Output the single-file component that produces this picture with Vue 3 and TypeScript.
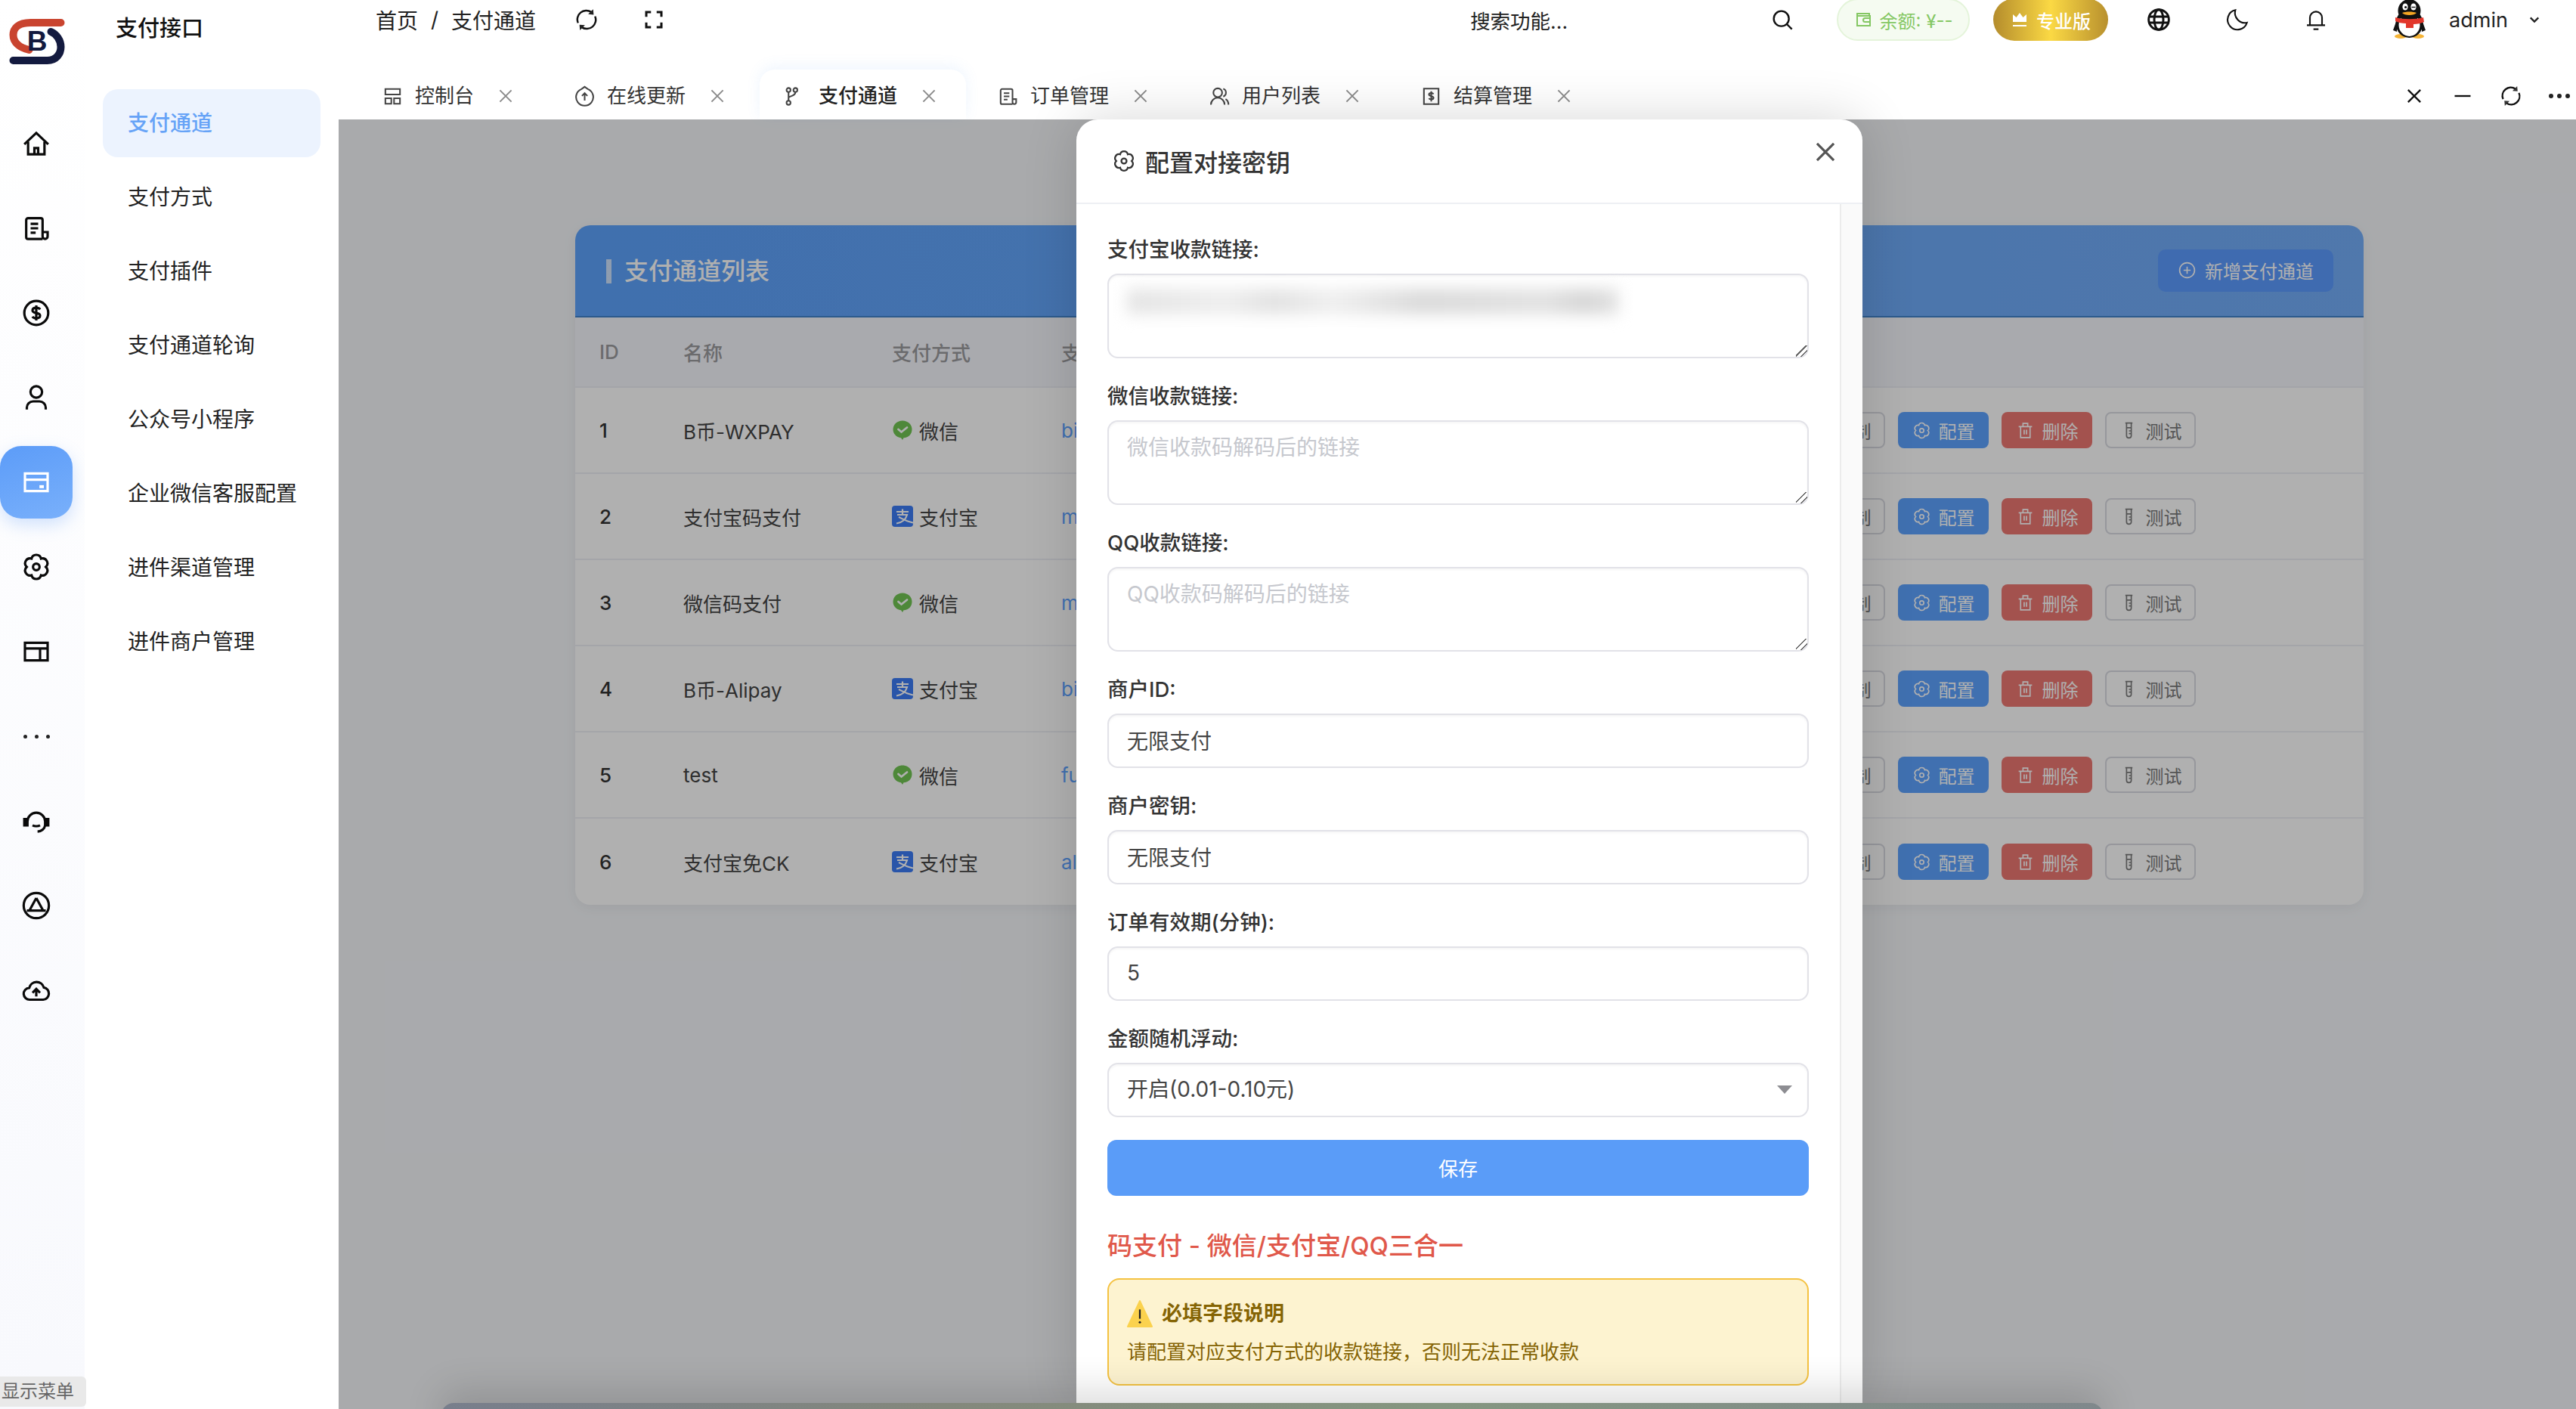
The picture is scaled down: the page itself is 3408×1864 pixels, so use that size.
<script setup lang="ts">
import { ref } from 'vue'

// 图标路径
const icons: Record<string, string> = {
  home: '<path d="M2.5 12.5 12 3.5l9.5 9"/><path d="M5.5 10.5V20.5h13V10.5"/><path d="M10.5 20.5v-5h3v5"/>',
  doc: '<path d="M17 20.5H5.500A1.500 1.500 0 0 1 4 19V5.500A1.500 1.500 0 0 1 5.500 4H15.500A1.500 1.500 0 0 1 17 5.500V18.500a2 2 0 0 0 2 2 2 2 0 0 0 2-2V15h-4"/><path d="M7.500 8.500h6M7.500 12h6M7.500 15.500h4"/>',
  dollar: '<circle cx="12" cy="12" r="9.5"/><path d="M15 9.200c-.6-.9-1.700-1.300-3-1.300-1.800 0-3 .8-3 2.100 0 2.900 6 1.300 6 4.100 0 1.300-1.200 2.100-3 2.100-1.400 0-2.500-.5-3-1.400M12 6v12"/>',
  person: '<circle cx="12" cy="7.500" r="4.600"/><path d="M4.500 21.500V20a5 5 0 0 1 5-5h5a5 5 0 0 1 5 5v1.500"/>',
  card: '<path d="M3 5h18v14H3zM3 10h18"/><path d="M14.500 15.500h3.500" stroke-width="2.400"/>',
  gear: '<path d="M8.200 5.420A3.900 3.900 0 0 1 15.800 5.420 3.900 3.900 0 0 1 19.600 12 3.900 3.900 0 0 1 15.800 18.580 3.900 3.900 0 0 1 8.200 18.580 3.900 3.900 0 0 1 4.400 12 3.900 3.900 0 0 1 8.200 5.420z"/><circle cx="12" cy="12" r="2.600"/>',
  layout: '<path d="M3 5h18v14H3zM3 9.500h18M15 9.500V19"/>',
  headset: '<path d="M5 12.500a7 7 0 0 1 14 0"/><path d="M2.500 10.500h2.500v5H2.500zM19 10.500h2.500v5H19z" fill="currentColor"/><path d="M9 15.500c1.600.8 4.400.8 6 0M19 15.500c-.4 3-3 4.800-6 5"/>',
  store: '<circle cx="12" cy="12" r="10"/><path d="M12 6 6.500 16M12 6l5.500 10M4.500 16h15"/>',
  cloud: '<path d="M7 19.500a4.700 4.700 0 0 1-.6-9.400A6 6 0 0 1 18 9.800a4.900 4.900 0 0 1-.5 9.700z"/><path d="M12 17v-5.500M9 14l3-3 3 3"/>',
  refresh: '<path d="M3 15.500A9.500 9.500 0 0 1 17 3.900M21 8.500A9.500 9.500 0 0 1 7 20.100"/><path d="m19 .9.500 5.800-5.800-.5zM5 23.100l-.5-5.800 5.800.5z" fill="currentColor" stroke="none"/>',
  full: '<path d="M4 9V4h5M15 4h5v5M20 15v5h-5M9 20H4v-5"/>',
  grid: '<path d="M4 4h16v6H4zM4 14h6.500v6H4zM13.500 14H20v6h-6.500z"/>',
  upload: '<path d="M12 1.500 15.500 4A9.400 9.400 0 1 1 8.500 4z"/><path d="M12 16.500v-8M9 11.500 12 8.500l3 3"/>',
  branch: '<circle cx="3.500" cy="5" r="2.200"/><circle cx="3.500" cy="19" r="2.200"/><circle cx="11" cy="5" r="2.200"/><path d="M3.500 7.200v9.600M11 7.200c0 4-3.500 3.500-7.500 6"/>',
  users: '<circle cx="10" cy="8" r="4.800"/><path d="M2.500 21a7.500 7.500 0 0 1 15 0M16 3.600a4.600 4.600 0 0 1 0 8.600M18.500 15c2 1 3.200 3.200 3.200 6"/>',
  settle: '<path d="M4 3.500h16v17H4z"/><path d="M14.500 9.500c-.5-.8-1.400-1.200-2.500-1.200-1.500 0-2.500.6-2.500 1.700 0 2.400 5 1 5 3.400 0 1.100-1 1.800-2.500 1.800-1.200 0-2.100-.4-2.500-1.200M12 6.500v11"/>',
  search: '<circle cx="11" cy="11" r="7.500"/><path d="m16.500 16.500 5 5"/>',
  wallet: '<path d="M20 7V4H4v16h17V7H4"/><path d="M21 10h-6.500a2.500 2.500 0 0 0 0 5H21"/>',
  crown: '<path d="M3 15V5l4.500 4L12 3l4.500 6L21 5v10z" fill="currentColor" stroke="none"/><path d="M3 20h18"/>',
  globe: '<circle cx="12" cy="12" r="10"/><path d="M2 9h20M2 15h20"/><ellipse cx="12" cy="12" rx="4.500" ry="10"/>',
  moon: '<path d="M10 2.500A9.800 9.800 0 1 0 21.500 15 10 10 0 0 1 10 2.500z"/>',
  bell: '<path d="M6 17V10a6 6 0 0 1 12 0v7M3 17.500h18M9.500 21.500h5"/>',
  close: '<path d="m5 5 14 14M19 5 5 19"/>',
  minus: '<path d="M3 12h18"/>',
  chevron: '<path d="m5 8.500 7 7 7-7"/>',
  plus: '<circle cx="12" cy="12" r="9.500"/><path d="M12 7.500v9M7.500 12h9"/>',
  trash: '<path d="M3.500 7h17M6 7v14h12V7M9 7V3h6v4M10.500 11v6M13.500 11v6"/>',
  tube: '<path d="M7.500 2.500h9M9 2.500v16a3 3 0 0 0 6 0v-16M9 8.500h6M12 12.500h3M12 16h3"/>',
  copy: '<path d="M8 8h12v12H8zM16 8V4H4v12h4"/>'
}

const railItems = ['home', 'doc', 'dollar', 'person', 'card', 'gear', 'layout', 'dots', 'headset', 'store', 'cloud']
const menuItems = ['支付通道', '支付方式', '支付插件', '支付通道轮询', '公众号小程序', '企业微信客服配置', '进件渠道管理', '进件商户管理']

const tabs = [
  { title: '控制台', icon: 'grid' },
  { title: '在线更新', icon: 'upload' },
  { title: '支付通道', icon: 'branch', active: true },
  { title: '订单管理', icon: 'doc' },
  { title: '用户列表', icon: 'users' },
  { title: '结算管理', icon: 'settle' }
]

const channels = [
  { id: 1, name: 'B币-WXPAY', method: 'wechat', plugin: 'bilipay' },
  { id: 2, name: '支付宝码支付', method: 'alipay', plugin: 'mapi' },
  { id: 3, name: '微信码支付', method: 'wechat', plugin: 'mapi' },
  { id: 4, name: 'B币-Alipay', method: 'alipay', plugin: 'bilipay' },
  { id: 5, name: 'test', method: 'wechat', plugin: 'future' },
  { id: 6, name: '支付宝免CK', method: 'alipay', plugin: 'alipay' }
]

const merchantId = ref('无限支付')
const merchantKey = ref('无限支付')
const expire = ref('5')
const floatMode = ref('on')
</script>

<template>
  <div class="layout">
    <!-- 图标导航 -->
    <aside class="rail">
      <div class="logo">
        <svg viewBox="0 0 73 62" class="logo-mark">
          <path d="M68 6H28C11 6 5 14 5 22c0 10 8 17 21 20" fill="none" stroke="#c9442f" stroke-width="10" stroke-linecap="round" />
          <path d="M5 56h45c12 0 18-9 18-18 0-9-6-17-13-20" fill="none" stroke="#131a3f" stroke-width="10" stroke-linecap="round" />
          <text x="36.500" y="43" text-anchor="middle" class="logo-text">B</text>
        </svg>
      </div>
      <div v-for="item in railItems" :key="item" class="rail-item" :class="{ active: item === 'card' }">
        <span v-if="item === 'dots'" class="rail-dots"><i></i><i></i><i></i></span>
        <svg v-else viewBox="0 0 24 24" class="rail-icon" v-html="icons[item]"></svg>
      </div>
    </aside>

    <!-- 二级菜单 -->
    <nav class="submenu">
      <h2 class="submenu-title">支付接口</h2>
      <a v-for="(item, i) in menuItems" :key="item" class="submenu-item" :class="{ active: i === 0 }">{{ item }}</a>
    </nav>

    <section class="main">
      <header class="topbar">
        <div class="top-row">
          <span class="crumb">首页</span>
          <span class="crumb-sep">/</span>
          <span class="crumb">支付通道</span>
          <svg viewBox="0 0 24 24" class="top-icon refresh-icon" v-html="icons.refresh"></svg>
          <svg viewBox="0 0 24 24" class="top-icon full-icon" v-html="icons.full"></svg>
          <span class="search-text">搜索功能...</span>
          <svg viewBox="0 0 24 24" class="top-icon search-icon" v-html="icons.search"></svg>
          <span class="balance-pill">
            <svg viewBox="0 0 24 24" class="pill-icon" v-html="icons.wallet"></svg>
            余额: ¥--
          </span>
          <span class="pro-pill">
            <svg viewBox="0 0 24 24" class="pill-icon" v-html="icons.crown"></svg>
            专业版
          </span>
          <svg viewBox="0 0 24 24" class="top-icon globe-icon" v-html="icons.globe"></svg>
          <svg viewBox="0 0 24 24" class="top-icon tool-icon" v-html="icons.moon"></svg>
          <svg viewBox="0 0 24 24" class="top-icon tool-icon" v-html="icons.bell"></svg>
          <svg viewBox="0 0 47 54" class="avatar">
            <ellipse cx="12" cy="49" rx="8" ry="3" fill="#f5b335" />
            <ellipse cx="35" cy="49" rx="8" ry="3" fill="#f5b335" />
            <path d="M7 27 2 41l5 2zM40 27l5 14-5 2z" fill="#111" />
            <ellipse cx="23.500" cy="32" rx="18" ry="19" fill="#111" />
            <ellipse cx="23.500" cy="34" rx="14" ry="15" fill="#fff" />
            <ellipse cx="23.500" cy="15" rx="15" ry="15" fill="#111" />
            <ellipse cx="18" cy="10" rx="3.600" ry="4.600" fill="#fff" />
            <ellipse cx="29" cy="10" rx="3.600" ry="4.600" fill="#fff" />
            <circle cx="18.600" cy="10.500" r="1.600" fill="#111" />
            <path d="M26.500 10.500h5" stroke="#111" stroke-width="1.400" />
            <path d="M14 18c5-2 14-2 19 0-3 4-16 4-19 0z" fill="#f5a623" />
            <path d="M5 24c10 3 27 3 37 0l1 6c-4 2-9 3-14 3v5h-10v-6c-5 0-10-1-14-3z" fill="#e2372b" />
          </svg>
          <span class="user-name">admin</span>
          <svg viewBox="0 0 24 24" class="user-arrow" v-html="icons.chevron"></svg>
        </div>

        <div class="tab-row">
          <div v-for="tab in tabs" :key="tab.title" class="tab" :class="{ active: tab.active }">
            <svg viewBox="0 0 24 24" class="tab-icon" v-html="icons[tab.icon]"></svg>
            <span class="tab-title">{{ tab.title }}</span>
            <svg viewBox="0 0 24 24" class="tab-close" v-html="icons.close"></svg>
          </div>
          <div class="tab-tools">
            <svg viewBox="0 0 24 24" class="tab-tool" v-html="icons.close"></svg>
            <svg viewBox="0 0 24 24" class="tab-tool" v-html="icons.minus"></svg>
            <svg viewBox="0 0 24 24" class="tab-tool" v-html="icons.refresh"></svg>
            <span class="tool-dots"><i></i><i></i><i></i></span>
          </div>
        </div>
      </header>

      <div class="content">
        <div class="card">
          <div class="card-head">
            <h3 class="card-title">支付通道列表</h3>
            <button class="add-btn">
              <svg viewBox="0 0 24 24" class="btn-icon" v-html="icons.plus"></svg>
              新增支付通道
            </button>
          </div>
          <table class="channel-table">
            <colgroup>
              <col class="col-id" />
              <col class="col-name" />
              <col class="col-method" />
              <col class="col-plugin" />
              <col />
            </colgroup>
            <thead>
              <tr>
                <th>ID</th>
                <th>名称</th>
                <th>支付方式</th>
                <th>支付插件</th>
                <th>操作</th>
              </tr>
            </thead>
            <tbody>
              <tr v-for="row in channels" :key="row.id">
                <td class="id-cell">{{ row.id }}</td>
                <td>{{ row.name }}</td>
                <td>
                  <span class="method">
                    <svg v-if="row.method === 'wechat'" viewBox="0 0 28 28" class="method-icon">
                      <path d="M14 1.500C7 1.500 1.500 6.500 1.500 13c0 6 4.500 10.500 10.500 11.300l2 2.700 1.500-2.700C22 24 26.500 19.500 26.500 13 26.500 6.500 21 1.500 14 1.500z" fill="#71c553" />
                      <path d="m8.500 13 4 3.500 7.500-6" fill="none" stroke="#fff" stroke-width="2.800" stroke-linecap="round" />
                    </svg>
                    <svg v-else viewBox="0 0 28 28" class="method-icon">
                      <rect width="28" height="28" rx="4" fill="#3c7cf5" />
                      <path d="M6 8h16M14 4.500V12M7 12h13c-1.500 6-7 10.500-14 11.500M9 15c4 2 11 6 19 7.500" fill="none" stroke="#fff" stroke-width="2.200" />
                    </svg>
                    {{ row.method === 'wechat' ? '微信' : '支付宝' }}
                  </span>
                </td>
                <td class="plugin-cell">{{ row.plugin }}</td>
                <td>
                  <div class="row-actions">
                    <button class="row-btn plain">
                      <svg viewBox="0 0 24 24" class="btn-icon" v-html="icons.copy"></svg>复制
                    </button>
                    <button class="row-btn primary">
                      <svg viewBox="0 0 24 24" class="btn-icon" v-html="icons.gear"></svg>配置
                    </button>
                    <button class="row-btn danger">
                      <svg viewBox="0 0 24 24" class="btn-icon" v-html="icons.trash"></svg>删除
                    </button>
                    <button class="row-btn plain">
                      <svg viewBox="0 0 24 24" class="btn-icon" v-html="icons.tube"></svg>测试
                    </button>
                  </div>
                </td>
              </tr>
            </tbody>
          </table>
        </div>
      </div>

      <!-- 弹窗遮罩 -->
      <div class="scrim"></div>

      <div class="modal">
        <div class="modal-head">
          <svg viewBox="0 0 24 24" class="modal-head-icon" v-html="icons.gear"></svg>
          <h3 class="modal-title">配置对接密钥</h3>
          <svg viewBox="0 0 24 24" class="modal-close" v-html="icons.close"></svg>
        </div>
        <div class="modal-body">
          <form class="modal-form" @submit.prevent>
            <div class="field">
              <label>支付宝收款链接:</label>
              <div class="secret-box">
                <textarea class="control area"></textarea>
                <span class="secret-blur"></span>
              </div>
            </div>
            <div class="field">
              <label>微信收款链接:</label>
              <textarea class="control area" placeholder="微信收款码解码后的链接"></textarea>
            </div>
            <div class="field">
              <label>QQ收款链接:</label>
              <textarea class="control area" placeholder="QQ收款码解码后的链接"></textarea>
            </div>
            <div class="field">
              <label>商户ID:</label>
              <input v-model="merchantId" class="control" />
            </div>
            <div class="field">
              <label>商户密钥:</label>
              <input v-model="merchantKey" class="control" />
            </div>
            <div class="field">
              <label>订单有效期(分钟):</label>
              <input v-model="expire" class="control" />
            </div>
            <div class="field">
              <label>金额随机浮动:</label>
              <div class="select-wrap">
                <select v-model="floatMode" class="control">
                  <option value="on">开启(0.01-0.10元)</option>
                  <option value="off">关闭</option>
                </select>
              </div>
            </div>
            <button class="save-btn">保存</button>
            <h4 class="form-note">码支付 - 微信/支付宝/QQ三合一</h4>
            <div class="notice">
              <div class="notice-title">
                <svg viewBox="0 0 36 40" class="notice-icon">
                  <path d="M18 2 35 38H1z" fill="#fbd24e" stroke="#fbd24e" stroke-width="2" stroke-linejoin="round" />
                  <path d="M18 14v13" stroke="#222" stroke-width="2.400" />
                  <circle cx="18" cy="32" r="1.600" fill="#222" />
                </svg>
                必填字段说明
              </div>
              <p class="notice-text">请配置对应支付方式的收款链接，否则无法正常收款</p>
            </div>
          </form>
          <div class="scroll-track"></div>
        </div>
      </div>

      <div class="dock"></div>
    </section>

    <div class="menu-toggle">显示菜单</div>
  </div>
</template>

<style scoped>
.layout {
  position: relative;
  display: flex;
  width: 3408px;
  height: 1864px;
  overflow: hidden;
  background: #fff;
  color: #333;
  font-family: Inter, "Noto Sans CJK SC", sans-serif;
}

/* 图标导航 */
.rail {
  flex: 0 0 112px;
  display: flex;
  flex-direction: column;
  align-items: stretch;
  gap: 16px;
  background: linear-gradient(180deg, #fff 0%, #f8f9fd 100%);
}

.logo {
  height: 126px;
  padding: 24px 0 0 12px;
  box-sizing: border-box;
}

.logo-mark {
  display: block;
  width: 74px;
  height: 62px;
}

.logo-text {
  font-family: "Liberation Sans", sans-serif;
  font-size: 37px;
  font-weight: 700;
  fill: #131a3f;
}

.rail-item {
  width: 96px;
  height: 96px;
  display: flex;
  align-items: center;
  justify-content: center;
  color: #0a0a0a;
  border-radius: 0 28px 28px 0;
}

.rail-item.active {
  color: #fff;
  border-radius: 28px;
  background: linear-gradient(160deg, #5c9cf8, #79b0fb);
  box-shadow: 0 8px 22px rgba(92, 156, 248, 0.28);
}

.rail-icon {
  width: 40px;
  height: 40px;
  fill: none;
  stroke: currentColor;
  stroke-width: 1.9;
}

.rail-dots {
  display: flex;
  gap: 10px;
}

.rail-dots i {
  width: 5px;
  height: 5px;
  border-radius: 50%;
  background: #222;
}

/* 二级菜单 */
.submenu {
  flex: 0 0 336px;
  display: flex;
  flex-direction: column;
  gap: 8px;
  padding: 0 24px;
  box-sizing: border-box;
  background: #fff;
}

.submenu-title {
  height: 110px;
  margin: 0;
  padding: 18px 0 0 17px;
  box-sizing: border-box;
  font-size: 29px;
  line-height: 40px;
  font-weight: 500;
  color: #111;
}

.submenu-item {
  height: 90px;
  padding-left: 33px;
  border-radius: 20px;
  font-size: 28px;
  line-height: 90px;
  color: #222;
}

.submenu-item.active {
  background: #ecf3fe;
  color: #66a3f7;
  font-weight: 500;
}

/* 顶栏 */
.main {
  position: relative;
  flex: 1;
  min-width: 0;
  display: flex;
  flex-direction: column;
}

.topbar {
  flex: 0 0 158px;
  background: #fff;
}

.top-row {
  display: flex;
  align-items: center;
  height: 54px;
  padding: 0 0 2px 49px;
  box-sizing: border-box;
  font-size: 28px;
  color: #222;
}

.crumb-sep {
  margin: 0 17px;
}

.top-icon {
  width: 32px;
  height: 32px;
  flex: none;
  fill: none;
  stroke: #111;
  stroke-width: 1.8;
}

.refresh-icon {
  width: 30px;
  height: 30px;
  margin-left: 52px;
  stroke-width: 2;
}

.full-icon {
  width: 30px;
  height: 30px;
  margin-left: 59px;
  stroke-width: 2.4;
}

.search-text {
  margin-left: 1065px;
  font-size: 26.500px;
}

.search-icon {
  margin-left: 268px;
}

.balance-pill,
.pro-pill {
  flex: none;
  display: flex;
  align-items: center;
  justify-content: center;
  gap: 10px;
  height: 56px;
  box-sizing: border-box;
  border-radius: 28px;
  font-size: 24px;
  white-space: nowrap;
}

.balance-pill {
  width: 176px;
  margin-left: 56px;
  background: #f5fbf1;
  border: 2px solid #e4f4da;
  color: #84c763;
}

.pro-pill {
  width: 152px;
  margin-left: 31px;
  background: linear-gradient(90deg, #b48c2c 0%, #fbd944 50%, #b8902e 100%);
  color: #fff;
  font-weight: 500;
}

.pill-icon {
  width: 24px;
  height: 24px;
  fill: none;
  stroke: currentColor;
  stroke-width: 2;
}

.globe-icon {
  margin-left: 51px;
  stroke-width: 2.2;
}

.tool-icon {
  margin-left: 72px;
  stroke-width: 1.6;
}

.avatar {
  width: 47px;
  height: 54px;
  flex: none;
  margin-left: 84px;
}

.user-name {
  margin-left: 29px;
  font-size: 27px;
}

.user-arrow {
  width: 18px;
  height: 18px;
  margin-left: 26px;
  fill: none;
  stroke: #222;
  stroke-width: 3;
}

/* 标签页 */
.tab-row {
  display: flex;
  align-items: center;
  height: 66px;
  margin-top: 38px;
  padding: 4px 0 0 33px;
  box-sizing: border-box;
}

.tab {
  position: relative;
  display: flex;
  align-items: center;
  padding: 0 53px 0 24px;
  color: #333;
}

.tab.active::before {
  content: "";
  position: absolute;
  top: -15px;
  bottom: -11px;
  left: -10px;
  right: 17px;
  border-radius: 20px 20px 0 0;
  background: #fff;
  box-shadow: 0 -4px 18px rgba(92, 156, 248, 0.1);
}

.tab > * {
  position: relative;
}

.tab-icon {
  width: 29px;
  height: 29px;
  margin-right: -1px;
  fill: none;
  stroke: #444;
  stroke-width: 1.700;
}

.tab-title {
  margin-left: 16px;
  font-size: 26px;
  line-height: 40px;
}

.tab.active .tab-title {
  font-weight: 500;
  color: #222;
}

.tab-close {
  width: 26px;
  height: 26px;
  margin-left: 29px;
  fill: none;
  stroke: #8a8a8a;
  stroke-width: 1.800;
}

.tab-tools {
  display: flex;
  align-items: center;
  gap: 36px;
  margin-left: auto;
  padding-right: 8px;
}

.tab-tool {
  width: 28px;
  height: 28px;
  fill: none;
  stroke: #111;
  stroke-width: 2;
}

.tool-dots {
  display: flex;
  gap: 5px;
  width: 28px;
}

.tool-dots i {
  width: 6px;
  height: 6px;
  border-radius: 50%;
  background: #222;
}

/* 列表 */
.content {
  flex: 1;
  padding: 140px 281px 0 313px;
  background: #f5f7fa;
}

.card {
  border-radius: 20px;
  background: #fff;
  box-shadow: 0 4px 20px rgba(0, 0, 0, 0.06);
  overflow: hidden;
}

.card-head {
  display: flex;
  align-items: center;
  justify-content: space-between;
  height: 122px;
  padding: 0 40px 0 41px;
  box-sizing: border-box;
  background: linear-gradient(90deg, #5da2fc, #74aef9);
  border-bottom: 2px solid #4183cb;
}

.card-title {
  margin: 2px 0 0;
  padding-left: 17px;
  border-left: 7px solid rgba(255, 255, 255, 0.7);
  font-size: 32px;
  line-height: 32px;
  font-weight: 500;
  color: #fff;
}

.add-btn {
  display: flex;
  align-items: center;
  gap: 11px;
  height: 56px;
  width: 232px;
  padding: 0 0 2px 26px;
  box-sizing: border-box;
  border: none;
  border-radius: 10px;
  background: #5c9bff;
  color: #fff;
  font: inherit;
  font-size: 24px;
}

.btn-icon {
  width: 25px;
  height: 25px;
  fill: none;
  stroke: currentColor;
  stroke-width: 1.600;
  flex: none;
}

.channel-table {
  width: 100%;
  table-layout: fixed;
  border-collapse: collapse;
}

.col-id {
  width: 111px;
}

.col-name {
  width: 276px;
}

.col-method {
  width: 224px;
}

.col-plugin {
  width: 970px;
}

.channel-table th {
  height: 91px;
  padding: 0 0 0 32px;
  background: #f5f6fd;
  border-bottom: 2px solid #eceef5;
  text-align: left;
  font-size: 26px;
  font-weight: 500;
  color: #9b9b9e;
}

.channel-table td {
  height: 112px;
  padding: 0 0 0 32px;
  border-bottom: 2px solid #eef0f5;
  font-size: 26px;
  color: #444;
}

.channel-table tr:last-child td {
  height: 114px;
  border-bottom: none;
}

.channel-table .id-cell {
  font-weight: 500;
  color: #333;
}

.channel-table .plugin-cell {
  color: #5da2ff;
}

.method {
  display: flex;
  align-items: center;
  gap: 8px;
}

.method-icon {
  width: 28px;
  height: 28px;
  flex: none;
}

.row-actions {
  display: flex;
  gap: 17px;
}

.row-btn {
  display: flex;
  align-items: center;
  justify-content: center;
  gap: 10px;
  width: 120px;
  height: 48px;
  padding: 0;
  box-sizing: border-box;
  border-radius: 8px;
  border: none;
  color: #fff;
  font: inherit;
  font-size: 24px;
}

.row-btn.primary {
  background: #5da2ff;
}

.row-btn.danger {
  background: #ec7772;
}

.row-btn.plain {
  border: 2px solid #dadbe2;
  background: #fff;
  color: #7b7b7b;
}

/* 遮罩与弹窗 */
.scrim {
  position: absolute;
  inset: 158px 0 0;
  background: rgba(0, 0, 0, 0.31);
}

.modal {
  position: absolute;
  top: 158px;
  left: 976px;
  display: flex;
  flex-direction: column;
  width: 1040px;
  height: 1698px;
  border-radius: 28px 28px 0 0;
  background: #fff;
  box-shadow: 0 0 70px rgba(0, 0, 0, 0.16);
  overflow: hidden;
}

.modal-head {
  flex: 0 0 112px;
  display: flex;
  align-items: center;
  padding: 0 30px 0 48px;
  box-sizing: border-box;
  border-bottom: 2px solid #eef0f4;
}

.modal-head-icon {
  width: 32px;
  height: 32px;
  margin-left: -1px;
  fill: none;
  stroke: #333;
  stroke-width: 1.700;
}

.modal-title {
  margin: 0 0 0 12px;
  font-size: 32px;
  font-weight: 500;
  color: #333;
}

.modal-close {
  width: 38px;
  height: 38px;
  margin: -24px 0 0 auto;
  fill: none;
  stroke: #555;
  stroke-width: 2;
}

.modal-body {
  flex: 1;
  display: flex;
  min-height: 0;
}

.modal-form {
  flex: 1;
  min-width: 0;
  padding: 40px 41px 0;
}

.scroll-track {
  flex: 0 0 30px;
  background: #fafafa;
  border-left: 2px solid #ececec;
  box-sizing: border-box;
}

.field {
  margin-bottom: 30px;
}

.field label {
  display: block;
  height: 40px;
  margin-bottom: 12px;
  font-size: 27.500px;
  line-height: 40px;
  font-weight: 500;
  color: #333;
}

.control {
  display: block;
  width: 100%;
  height: 72px;
  padding: 0 24px 2px;
  box-sizing: border-box;
  border: 2px solid #e2e2e8;
  border-radius: 14px;
  background: #fff;
  box-shadow: inset 0 2px 3px rgba(0, 0, 0, 0.04);
  outline: none;
  font: inherit;
  font-size: 28px;
  color: #444;
}

.area {
  height: 112px;
  padding: 14px 24px;
  line-height: 40px;
  resize: vertical;
}

.area::placeholder {
  color: #c6c8ce;
}

.area::-webkit-resizer {
  background: linear-gradient(135deg, transparent 42%, #666 42% 50%, transparent 50% 68%, #666 68% 76%, transparent 76%);
}

.secret-box {
  position: relative;
}

.secret-blur {
  position: absolute;
  top: 20px;
  left: 26px;
  width: 650px;
  height: 34px;
  background: linear-gradient(90deg, #e4e4e4, #eeeeee 20%, #e2e2e2 30%, #efefef 42%, #dadada 60%, #e2e2e2 85%, #d6d6d6 93%, #e2e2e2);
  filter: blur(10px);
  pointer-events: none;
}

.select-wrap {
  position: relative;
}

.select-wrap::after {
  content: "";
  position: absolute;
  top: 30px;
  right: 22px;
  border-left: 10px solid transparent;
  border-right: 10px solid transparent;
  border-top: 11px solid #8d8d92;
}

.select-wrap select {
  appearance: none;
}

.save-btn {
  display: block;
  width: 100%;
  height: 74px;
  padding: 0 0 2px;
  border: none;
  border-radius: 12px;
  background: #5a9cf8;
  color: #fff;
  font: inherit;
  font-size: 26px;
}

.form-note {
  margin: 44px 0 21px;
  font-size: 33px;
  line-height: 44px;
  font-weight: 500;
  color: #e0584a;
}

.notice {
  height: 142px;
  padding: 26px 24px 0;
  box-sizing: border-box;
  border: 2px solid #f4c242;
  border-radius: 16px;
  background: #fdf3d0;
  color: #856404;
}

.notice-title {
  display: flex;
  align-items: center;
  gap: 12px;
  font-size: 27px;
  line-height: 36px;
  font-weight: 600;
}

.notice-icon {
  width: 34px;
  height: 38px;
}

.notice-text {
  margin: 14px 0 0;
  font-size: 26px;
  line-height: 36px;
}

.dock {
  position: absolute;
  left: 136px;
  right: 626px;
  top: 1856px;
  height: 60px;
  border-radius: 16px 16px 0 0;
  background: linear-gradient(90deg, #787e8c, #84887c 30%, #859680 60%, #80888c);
  box-shadow: 0 -16px 50px rgba(0, 0, 0, 0.14);
}

.menu-toggle {
  position: absolute;
  left: 0;
  bottom: 3px;
  width: 114px;
  height: 40px;
  padding-left: 2px;
  box-sizing: border-box;
  border-radius: 0 6px 6px 0;
  background: #e9e9e9;
  font-size: 24px;
  line-height: 40px;
  color: #666;
}
</style>

<style>
html,
body {
  margin: 0;
  background: #fff;
}
</style>
